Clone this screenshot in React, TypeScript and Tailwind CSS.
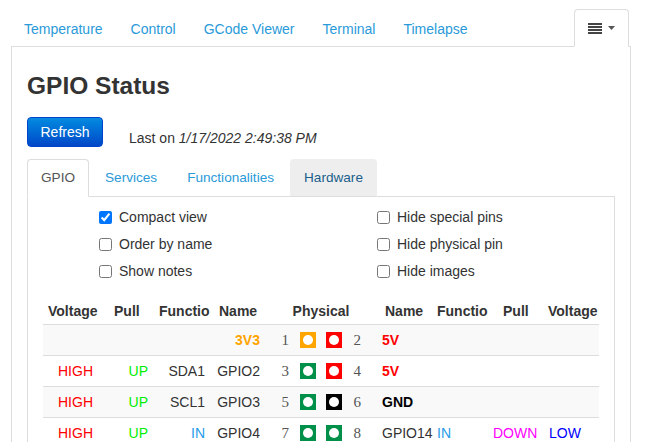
import React from "react";

type Row = {
  lv: string; lvc: string;
  lp: string; lpc: string;
  lf: string; lfc: string;
  ln: string; lnc: string;
  p1: string; c1: string; c2: string; p2: string;
  rn: string; rnc: string;
  rf: string; rfc: string;
  rp: string; rpc: string;
  rv: string; rvc: string;
  bg: string;
};

const rows: Row[] = [
  {
    lv: "", lvc: "", lp: "", lpc: "", lf: "", lfc: "",
    ln: "3V3", lnc: "font-bold text-[#ffa500]",
    p1: "1", c1: "bg-[#ffa500]", c2: "bg-[#ff0000]", p2: "2",
    rn: "5V", rnc: "font-bold text-[#ff0000]",
    rf: "", rfc: "", rp: "", rpc: "", rv: "", rvc: "",
    bg: "bg-[#f9f9f9]",
  },
  {
    lv: "HIGH", lvc: "text-[#ff0000]", lp: "UP", lpc: "text-[#00ee00]", lf: "SDA1", lfc: "text-[#333]",
    ln: "GPIO2", lnc: "text-[#333]",
    p1: "3", c1: "bg-[#00904a]", c2: "bg-[#ff0000]", p2: "4",
    rn: "5V", rnc: "font-bold text-[#ff0000]",
    rf: "", rfc: "", rp: "", rpc: "", rv: "", rvc: "",
    bg: "bg-white",
  },
  {
    lv: "HIGH", lvc: "text-[#ff0000]", lp: "UP", lpc: "text-[#00ee00]", lf: "SCL1", lfc: "text-[#333]",
    ln: "GPIO3", lnc: "text-[#333]",
    p1: "5", c1: "bg-[#00904a]", c2: "bg-black", p2: "6",
    rn: "GND", rnc: "font-bold text-black",
    rf: "", rfc: "", rp: "", rpc: "", rv: "", rvc: "",
    bg: "bg-[#f9f9f9]",
  },
  {
    lv: "HIGH", lvc: "text-[#ff0000]", lp: "UP", lpc: "text-[#00ee00]", lf: "IN", lfc: "text-[#1e9be9]",
    ln: "GPIO4", lnc: "text-[#333]",
    p1: "7", c1: "bg-[#00904a]", c2: "bg-[#00904a]", p2: "8",
    rn: "GPIO14", rnc: "text-[#333]",
    rf: "IN", rfc: "text-[#1e9be9]", rp: "DOWN", rpc: "text-[#ff00ff]", rv: "LOW", rvc: "text-[#0000ff]",
    bg: "bg-white",
  },
];

function Pin({ c }: { c: string }) {
  return (
    <span className={"flex h-[16px] w-[16px] items-center justify-center " + c}>
      <span className="h-[10px] w-[10px] rounded-full bg-white" />
    </span>
  );
}

const gridCols =
  "grid grid-cols-[61px_50px_58px_52px_114px_55px_57px_53px_56px]";

function Check({ label, checked }: { label: string; checked?: boolean }) {
  return (
    <label className="flex h-[27px] items-center gap-[7px] text-[14px] text-[#333]">
      <input type="checkbox" defaultChecked={checked} className="m-0 h-[13px] w-[13px]" />
      <span>{label}</span>
    </label>
  );
}

function MenuIcon() {
  return (
    <svg width="14" height="11" viewBox="0 0 14 11" className="block">
      <rect x="0" y="0" width="14" height="2" fill="#444" />
      <rect x="0" y="3" width="14" height="2" fill="#444" />
      <rect x="0" y="6" width="14" height="2" fill="#444" />
      <rect x="0" y="9" width="14" height="2" fill="#444" />
    </svg>
  );
}

export default function App() {
  return (
    <div className="h-[442px] w-[660px] overflow-hidden bg-white font-['Liberation_Sans',Arial,sans-serif] text-[14px] text-[#333]">
      <div className="ml-[11px] w-[620px] pt-[9px]">
        {/* top nav */}
        <div className="flex items-end">
          <div className="flex gap-[28px] pb-[7px] pl-[13px] text-[14px] leading-[20px] text-[#2a9ad9]">
            <span>Temperature</span>
            <span>Control</span>
            <span>GCode Viewer</span>
            <span>Terminal</span>
            <span>Timelapse</span>
          </div>
          <div className="relative z-10 -mb-px ml-auto mr-[2px] flex h-[38px] items-center gap-[6px] rounded-t-[4px] border border-[#ddd] border-b-white bg-white pl-[13px] pr-[13px]">
            <MenuIcon />
            <svg width="7" height="4" viewBox="0 0 7 4" className="block">
              <path d="M0 0 L7 0 L3.5 4 Z" fill="#555" />
            </svg>
          </div>
        </div>

        {/* outer panel */}
        <div className="h-[400px] border-x border-t border-[#ddd] px-[15px]">
          <h1 className="mt-[24px] text-[24.5px] font-bold leading-[30px] text-[#333]">GPIO Status</h1>

          <div className="mt-[16px] flex items-start">
            <button className="h-[30px] w-[76px] rounded-[4px] border border-[#0044cc] bg-linear-to-b from-[#0a8ae0] to-[#0046c8] text-[14px] text-white">
              Refresh
            </button>
            <span className="ml-[26px] mt-[11px] leading-[20px] text-[#333]">
              Last on <i>1/17/2022 2:49:38 PM</i>
            </span>
          </div>

          {/* inner tabs */}
          <div className="mt-[11px] flex border-b border-[#ddd] text-[13.6px] leading-[20px]">
            <span className="-mb-px mr-[2px] rounded-t-[4px] border border-[#ddd] border-b-white bg-white px-[13px] pb-[9px] pt-[8px] leading-[19px] text-[#555]">
              GPIO
            </span>
            <span className="-mb-px mr-[2px] rounded-t-[4px] border border-transparent px-[13px] pb-[9px] pt-[8px] leading-[19px] text-[#2a9ad9]">
              Services
            </span>
            <span className="-mb-px mr-[2px] rounded-t-[4px] border border-transparent px-[13px] pb-[9px] pt-[8px] leading-[19px] text-[#2a9ad9]">
              Functionalities
            </span>
            <span className="-mb-px mr-[2px] rounded-t-[4px] border border-[#eee] border-b-[#ddd] bg-[#eee] px-[13px] pb-[9px] pt-[8px] leading-[19px] text-[#1b5f8c]">
              Hardware
            </span>
          </div>

          {/* inner content */}
          <div className="h-[300px] border-x border-[#ddd] px-[15px] pt-[7px]">
            <div className="grid grid-cols-[278px_auto] pl-[56px]">
              <div className="flex flex-col">
                <Check label="Compact view" checked />
                <Check label="Order by name" />
                <Check label="Show notes" />
              </div>
              <div className="flex flex-col">
                <Check label="Hide special pins" />
                <Check label="Hide physical pin" />
                <Check label="Hide images" />
              </div>
            </div>

            {/* table */}
            <div className="mt-[13px] w-[556px]">
              <div className={gridCols + " h-[27px] items-center border-b border-[#ddd] font-bold text-[#333]"}>
                <div className="pl-[5px]">Voltage</div>
                <div className="pl-[10px]">Pull</div>
                <div className="pl-[5px]">
                  <div className="w-[51px] overflow-hidden whitespace-nowrap">Function</div>
                </div>
                <div className="pl-[7px]">Name</div>
                <div className="text-center">Physical</div>
                <div className="pl-[7px]">Name</div>
                <div className="pl-[4px]">
                  <div className="w-[51px] overflow-hidden whitespace-nowrap">Function</div>
                </div>
                <div className="pl-[13px]">Pull</div>
                <div className="pl-[5px]">Voltage</div>
              </div>
              {rows.map((r, i) => (
                <div key={i} className={gridCols + " h-[31px] items-center border-b border-[#ddd] " + r.bg}>
                  <div className={"pr-[11px] text-right " + r.lvc}>{r.lv}</div>
                  <div className={"pr-[6px] text-right " + r.lpc}>{r.lp}</div>
                  <div className={"pr-[7px] text-right " + r.lfc}>{r.lf}</div>
                  <div className={"pr-[4px] text-right " + r.lnc}>{r.ln}</div>
                  <div className="flex items-center justify-center font-['Liberation_Serif',serif] text-[15px] text-[#555]">
                    <span className="w-[7px] text-center">{r.p1}</span>
                    <span className="ml-[11px]"><Pin c={r.c1} /></span>
                    <span className="ml-[10px]"><Pin c={r.c2} /></span>
                    <span className="ml-[12px] w-[7px] text-center">{r.p2}</span>
                  </div>
                  <div className={"whitespace-nowrap pl-[4px] " + r.rnc}>{r.rn}</div>
                  <div className={"pl-[4px] " + r.rfc}>{r.rf}</div>
                  <div className={"pl-[3px] " + r.rpc}>{r.rp}</div>
                  <div className={"pl-[6px] " + r.rvc}>{r.rv}</div>
                </div>
              ))}
            </div>
          </div>
        </div>
      </div>
    </div>
  );
}
